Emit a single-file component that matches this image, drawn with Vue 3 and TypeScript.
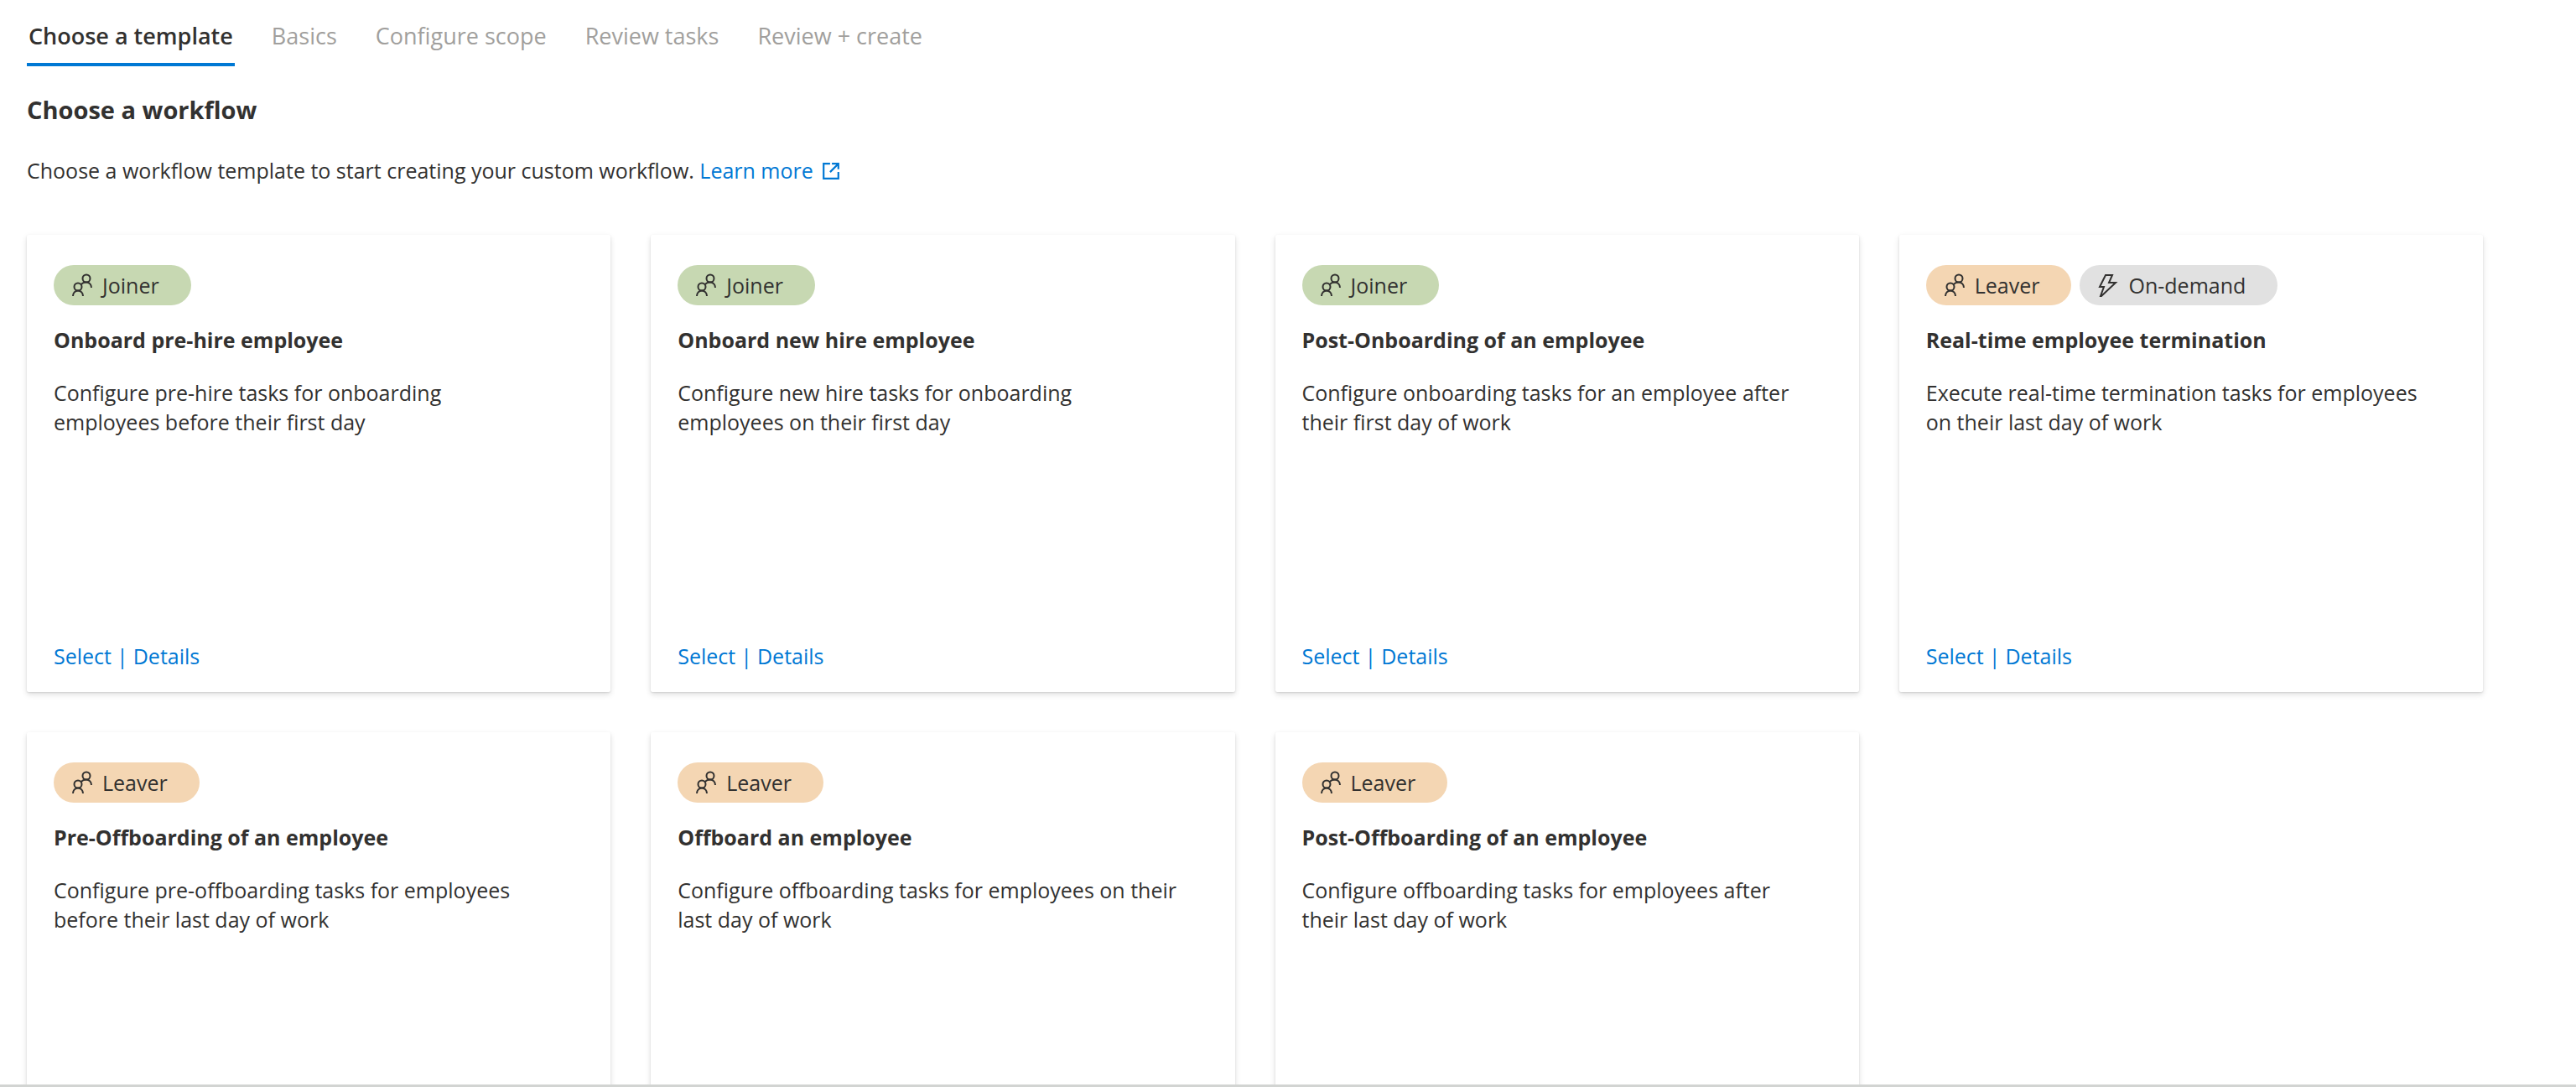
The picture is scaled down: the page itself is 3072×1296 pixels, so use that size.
<script setup lang="ts">
import { ref } from 'vue'

type BadgeKind = 'joiner' | 'leaver' | 'demand'

interface Badge {
  kind: BadgeKind
  label: string
}

interface Template {
  title: string
  description: string
  badges: Badge[]
  actions?: string[]
}

const joiner: Badge = { kind: 'joiner', label: 'Joiner' }
const leaver: Badge = { kind: 'leaver', label: 'Leaver' }
const onDemand: Badge = { kind: 'demand', label: 'On-demand' }

const steps: string[] = [
  'Choose a template',
  'Basics',
  'Configure scope',
  'Review tasks',
  'Review + create',
]
const current = ref(0)

const actions = ['Select', 'Details']

const templates: Template[] = [
  {
    title: 'Onboard pre-hire employee',
    description: 'Configure pre-hire tasks for onboarding\nemployees before their first day',
    badges: [joiner],
    actions,
  },
  {
    title: 'Onboard new hire employee',
    description: 'Configure new hire tasks for onboarding\nemployees on their first day',
    badges: [joiner],
    actions,
  },
  {
    title: 'Post-Onboarding of an employee',
    description: 'Configure onboarding tasks for an employee after\ntheir first day of work',
    badges: [joiner],
    actions,
  },
  {
    title: 'Real-time employee termination',
    description: 'Execute real-time termination tasks for employees\non their last day of work',
    badges: [leaver, onDemand],
    actions,
  },
  {
    title: 'Pre-Offboarding of an employee',
    description: 'Configure pre-offboarding tasks for employees\nbefore their last day of work',
    badges: [leaver],
  },
  {
    title: 'Offboard an employee',
    description: 'Configure offboarding tasks for employees on their\nlast day of work',
    badges: [leaver],
  },
  {
    title: 'Post-Offboarding of an employee',
    description: 'Configure offboarding tasks for employees after\ntheir last day of work',
    badges: [leaver],
  },
]
</script>

<template>
  <main class="page">
    <nav class="tabs" role="tablist" aria-label="Workflow steps">
      <button
        v-for="(step, i) in steps"
        :key="step"
        type="button"
        role="tab"
        class="tab"
        :class="{ active: i === current }"
        :aria-selected="i === current"
        @click="current = i"
      >{{ step }}</button>
    </nav>

    <h1 class="heading">Choose a workflow</h1>
    <p class="intro">
      Choose a workflow template to start creating your custom workflow.
      <a class="link" href="#learn-more">Learn more<svg class="external" viewBox="0 0 20 20" aria-hidden="true">
        <path d="M9 2H2v16h16v-7M11 2h7v6M18 2L9 11" />
      </svg></a>
    </p>

    <section class="grid">
      <article v-for="t in templates" :key="t.title" class="card">
        <div class="badges">
          <span v-for="b in t.badges" :key="b.label" class="badge" :class="b.kind">
            <svg v-if="b.kind === 'demand'" class="icon" viewBox="0 0 24 28" aria-hidden="true">
              <path d="M9 2h8l-4 9h8L4 27H3l4-11H2z" />
            </svg>
            <svg v-else class="icon" viewBox="0 0 24 28" aria-hidden="true">
              <circle cx="17" cy="6" r="4.5" />
              <circle cx="7" cy="16" r="4.5" />
              <path d="M1 27c0-3.600 2.600-6.500 6-6.500s6 2.900 6 6.500M11 13c1.200-1.600 3.200-2.500 6-2.500c3.400 0 6 2.900 6 6.500" />
            </svg>
            {{ b.label }}
          </span>
        </div>
        <h2 class="title">{{ t.title }}</h2>
        <p class="description">{{ t.description }}</p>
        <div v-if="t.actions" class="actions">
          <template v-for="(action, i) in t.actions" :key="action">
            <span v-if="i > 0">|</span>
            <button type="button" class="action">{{ action }}</button>
          </template>
        </div>
      </article>
    </section>
  </main>
</template>

<style>
body {
  margin: 0;
  background: #fff;
}
</style>

<style scoped>
.page {
  box-sizing: border-box;
  height: 100vh;
  overflow: hidden;
  padding: 0 111px 0 32px;
  border-bottom: 3px solid #d2d4d2;
  color: #323130;
  font-family: "Open Sans", "Noto Sans", sans-serif;
  font-size: 25px;
  line-height: 35px;
}

.tabs {
  display: flex;
  gap: 42px;
}

.tab {
  padding: 25px 2px 14px;
  border: 0;
  border-bottom: 4px solid transparent;
  background: none;
  color: #a19f9d;
  font: inherit;
  font-size: 27px;
  line-height: 36px;
  white-space: nowrap;
  cursor: pointer;
}

.tab.active {
  border-bottom-color: #0078d4;
  color: #323130;
  font-weight: 600;
}

.heading {
  margin: 32px 0 0;
  font-size: 29px;
  line-height: 40px;
  font-weight: 700;
}

.intro {
  margin: 35px 0 59px;
}

.link {
  color: #0078d4;
  text-decoration: none;
}

.external {
  width: 22px;
  height: 22px;
  margin-left: 10px;
  vertical-align: -2px;
  fill: none;
  stroke: currentColor;
  stroke-width: 2;
}

.grid {
  display: grid;
  grid-template-columns: repeat(4, 1fr);
  gap: 48px;
}

.card {
  box-sizing: border-box;
  display: flex;
  flex-direction: column;
  min-height: 545px;
  padding: 36px 32px 25px;
  border-radius: 2px;
  background: #fff;
  box-shadow: 0 3px 7px rgba(0, 0, 0, 0.13), 0 1px 2px rgba(0, 0, 0, 0.11);
}

.badges {
  display: flex;
  gap: 10px;
}

.badge {
  display: flex;
  align-items: center;
  gap: 12px;
  height: 48px;
  padding: 0 38px 0 22px;
  border-radius: 24px;
}

.joiner {
  background: #c7d8b2;
}

.leaver {
  background: #f4d6b3;
}

.demand {
  background: #e1e1e1;
}

.icon {
  width: 24px;
  height: 28px;
  fill: none;
  stroke: currentColor;
  stroke-width: 2;
}

.title {
  margin: 24px 0 0;
  font-size: 25px;
  line-height: 35px;
  font-weight: 700;
}

.description {
  margin: 28px 0 0;
  white-space: pre-line;
}

.actions {
  display: flex;
  gap: 6px;
  margin-top: auto;
  color: #0078d4;
}

.action {
  padding: 0;
  border: 0;
  background: none;
  color: inherit;
  font: inherit;
  cursor: pointer;
}
</style>
